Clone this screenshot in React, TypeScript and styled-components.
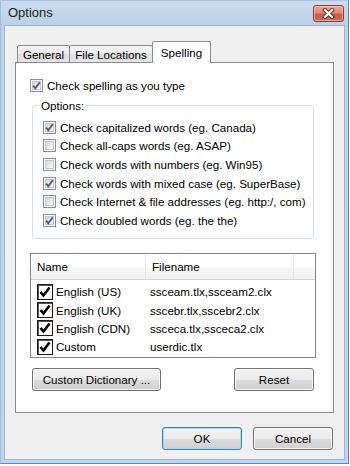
import React, { useState } from "react";
import styled, { createGlobalStyle } from "styled-components";

const GlobalStyle = createGlobalStyle`
  html, body {
    margin: 0;
    padding: 0;
    width: 350px;
    height: 466px;
    overflow: hidden;
    background: #ffffff;
  }
  body {
    font-family: "Liberation Sans", Arial, sans-serif;
    font-size: 11px;
    color: #000000;
  }
`;

const Window = styled.div`
  width: 349px;
  height: 464px;
  box-sizing: border-box;
  border: 1px solid #4b8fbc;
  border-top-color: #a9c3df;
  border-left-color: #9fbbd9;
  background: linear-gradient(#cadcf0 0px, #b9d0ea 25px, #bdd3ec 26px, #c0d6ee 100%);
  padding: 0 3px 3px 3px;
  display: flex;
  flex-direction: column;
`;

const TitleBar = styled.div`
  height: 24px;
  display: flex;
  align-items: center;
  justify-content: space-between;
  padding: 0 1px 0 4px;
`;

const Title = styled.span`
  font-size: 13px;
  color: #1b1b1b;
  margin-top: -1px;
`;

const CloseButton = styled.button`
  width: 31px;
  height: 17px;
  padding: 0;
  border: 1px solid #8d3b30;
  border-radius: 3px;
  background: linear-gradient(#eaa99b 0%, #dc8a79 45%, #c95a44 55%, #cf6b55 100%);
  box-shadow: inset 0 0 0 1px rgba(255, 220, 210, 0.55);
  display: flex;
  align-items: center;
  justify-content: center;
`;

const Client = styled.div`
  flex: 1;
  background: #f0f0f0;
  border: 1px solid #9fb5cf;
  padding: 15px 10px 0 10px;
  display: flex;
  flex-direction: column;
`;

const TabStrip = styled.div`
  height: 22px;
  display: flex;
  align-items: flex-end;
  padding-left: 2px;
  margin-bottom: -1px;
  position: relative;
  z-index: 1;
`;

const Tab = styled.div<{ $active?: boolean; $w: number }>`
  width: ${(p) => p.$w}px;
  height: ${(p) => (p.$active ? 22 : 18)}px;
  box-sizing: border-box;
  margin-left: -1px;
  border: 1px solid #898c95;
  border-bottom: ${(p) => (p.$active ? "none" : "1px solid #898c95")};
  border-radius: 2px 2px 0 0;
  background: ${(p) =>
    p.$active ? "#ffffff" : "linear-gradient(#f3f3f3 0%, #ebebeb 50%, #dedede 51%, #e4e4e4 100%)"};
  display: flex;
  align-items: center;
  justify-content: center;
  padding-top: ${(p) => (p.$active ? 0 : 1)}px;
  font-size: 11.6px;
  color: #000;
  &:first-child {
    margin-left: 0;
  }
`;

const Panel = styled.div`
  height: 351px;
  box-sizing: border-box;
  border: 1px solid #898c95;
  background: #ffffff;
  padding: 15px 14px 0 14px;
  display: flex;
  flex-direction: column;
`;

const CheckRow = styled.label<{ $h?: number }>`
  height: ${(p) => p.$h ?? 15}px;
  display: flex;
  align-items: center;
  gap: 4px;
  font-size: 11.6px;
  white-space: nowrap;
`;

const BoxOuter = styled.span`
  width: 13px;
  height: 13px;
  box-sizing: border-box;
  border: 1px solid #8e8f8f;
  background: #ffffff;
  padding: 1px;
  flex: none;
  display: flex;
`;

const BoxInner = styled.span`
  flex: 1;
  background: linear-gradient(135deg, #d2d4d8 0%, #eeeeee 60%, #fbfbfb 100%);
  border: 1px solid #c4c6ca;
  position: relative;
`;

const Tick = styled.svg`
  position: absolute;
  left: -2px;
  top: -2px;
`;

const Group = styled.fieldset`
  margin: 6px 0 0 2px;
  width: 282px;
  box-sizing: border-box;
  border: 1px solid #d5dfe5;
  border-radius: 3px;
  padding: 6px 0 8px 10px;
  min-width: 0;
`;

const GroupLabel = styled.legend`
  padding: 0 2px;
  margin-left: -4px;
  font-size: 11.6px;
  line-height: 13px;
  color: #000;
`;

const ListView = styled.div`
  margin-top: 14px;
  width: 286px;
  height: 105px;
  box-sizing: border-box;
  border: 1px solid #828790;
  background: #ffffff;
  display: flex;
  flex-direction: column;
`;

const HeaderRow = styled.div`
  height: 25px;
  display: flex;
  background: linear-gradient(#ffffff 0%, #ffffff 50%, #f6f7f8 51%, #f0f1f2 100%);
  border-bottom: 1px solid #d5d5d5;
  flex: none;
`;

const HeaderCell = styled.div<{ $w?: number }>`
  width: ${(p) => (p.$w ? `${p.$w}px` : "auto")};
  flex: ${(p) => (p.$w ? "none" : 1)};
  box-sizing: border-box;
  padding-left: 6px;
  padding-top: 1px;
  display: flex;
  align-items: center;
  border-right: 1px solid #e3e5e8;
  font-size: 11.6px;
  &:last-child {
    border-right: none;
  }
`;

const Rows = styled.div`
  padding-top: 3px;
`;

const Row = styled.div`
  height: 18.3px;
  display: flex;
  align-items: center;
  font-size: 11.6px;
  white-space: nowrap;
`;

const NameCell = styled.div`
  width: 114px;
  box-sizing: border-box;
  padding-left: 6px;
  display: flex;
  align-items: center;
  gap: 3px;
`;

const FileCell = styled.div`
  padding-left: 5px;
`;

const ClassicBox = styled.span`
  width: 16px;
  height: 16px;
  box-sizing: border-box;
  border: 1px solid #1a1a1a;
  box-shadow: inset 1px 1px 0 #555555;
  background: #ffffff;
  display: flex;
  align-items: center;
  justify-content: center;
  flex: none;
`;

const ButtonRow = styled.div<{ $top: number }>`
  margin-top: ${(p) => p.$top}px;
  display: flex;
  gap: 11px;
`;

const PushButton = styled.button<{ $w: number; $default?: boolean }>`
  width: ${(p) => p.$w}px;
  height: 23px;
  box-sizing: border-box;
  padding: 0;
  font-family: "Liberation Sans", Arial, sans-serif;
  font-size: 11.6px;
  color: #000;
  border: 1px solid ${(p) => (p.$default ? "#3c7fb1" : "#707070")};
  border-radius: 3px;
  background: linear-gradient(#f2f2f2 0%, #ebebeb 50%, #dddddd 51%, #cfcfcf 100%);
  box-shadow: inset 0 0 0 1px ${(p) => (p.$default ? "#a6dcf5" : "#fbfbfb")};
`;

const Spacer = styled.div`
  flex: 1;
`;

const VistaCheck = ({ checked }: { checked: boolean }) => (
  <BoxOuter>
    <BoxInner>
      {checked && (
        <Tick width="11" height="11" viewBox="0 0 11 11">
          <path d="M2.2 5.6 L4.3 8.2 L8.8 2.2" fill="none" stroke="#3d5498" strokeWidth="1.8" />
        </Tick>
      )}
    </BoxInner>
  </BoxOuter>
);

const options = [
  { label: "Check capitalized words (eg. Canada)", on: true },
  { label: "Check all-caps words (eg. ASAP)", on: false },
  { label: "Check words with numbers (eg. Win95)", on: false },
  { label: "Check words with mixed case (eg. SuperBase)", on: true },
  { label: "Check Internet & file addresses (eg. http:/, com)", on: false },
  { label: "Check doubled words (eg. the the)", on: true },
];

const dictionaries = [
  { name: "English (US)", file: "ssceam.tlx,ssceam2.clx" },
  { name: "English (UK)", file: "sscebr.tlx,sscebr2.clx" },
  { name: "English (CDN)", file: "ssceca.tlx,ssceca2.clx" },
  { name: "Custom", file: "userdic.tlx" },
];

const App = () => {
  const [tab] = useState("Spelling");

  return (
    <>
      <GlobalStyle />
      <Window>
        <TitleBar>
          <Title>Options</Title>
          <CloseButton>
            <svg width="13" height="11" viewBox="0 0 13 11">
              <path d="M3 2 L10 9 M10 2 L3 9" stroke="#6e2a20" strokeWidth="4" strokeLinecap="square" />
              <path d="M3 2 L10 9 M10 2 L3 9" stroke="#ffffff" strokeWidth="2.2" strokeLinecap="square" />
            </svg>
          </CloseButton>
        </TitleBar>
        <Client>
          <TabStrip>
            <Tab $w={53}>General</Tab>
            <Tab $w={84}>File Locations</Tab>
            <Tab $w={59} $active={tab === "Spelling"}>
              Spelling
            </Tab>
          </TabStrip>
          <Panel>
            <CheckRow>
              <VistaCheck checked />
              Check spelling as you type
            </CheckRow>
            <Group>
              <GroupLabel>Options:</GroupLabel>
              {options.map((o) => (
                <CheckRow key={o.label} $h={18.6}>
                  <VistaCheck checked={o.on} />
                  {o.label}
                </CheckRow>
              ))}
            </Group>
            <ListView>
              <HeaderRow>
                <HeaderCell $w={115}>Name</HeaderCell>
                <HeaderCell $w={148}>Filename</HeaderCell>
                <HeaderCell />
              </HeaderRow>
              <Rows>
                {dictionaries.map((d) => (
                  <Row key={d.name}>
                    <NameCell>
                      <ClassicBox>
                        <svg width="12" height="12" viewBox="0 0 12 12">
                          <path d="M1.5 6 L4.5 9.5 L10.5 1.5" fill="none" stroke="#000" strokeWidth="2.6" />
                        </svg>
                      </ClassicBox>
                      {d.name}
                    </NameCell>
                    <FileCell>{d.file}</FileCell>
                  </Row>
                ))}
              </Rows>
            </ListView>
            <ButtonRow $top={10}>
              <PushButton $w={129} style={{ marginLeft: 2 }}>
                Custom Dictionary ...
              </PushButton>
              <Spacer />
              <PushButton $w={80} style={{ marginRight: 5 }}>
                Reset
              </PushButton>
            </ButtonRow>
          </Panel>
          <ButtonRow $top={14}>
            <Spacer />
            <PushButton $w={80} $default>
              OK
            </PushButton>
            <PushButton $w={80} style={{ marginRight: 1 }}>
              Cancel
            </PushButton>
          </ButtonRow>
        </Client>
      </Window>
    </>
  );
};

export default App;
